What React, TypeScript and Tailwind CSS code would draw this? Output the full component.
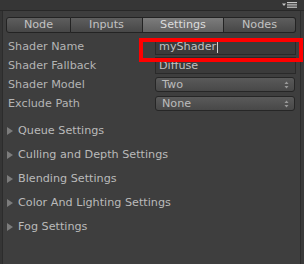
const tabs = [
  { label: "Node", w: "w-[65px]", active: false, first: true },
  { label: "Inputs", w: "w-[72px]", active: false },
  { label: "Settings", w: "w-[81px]", active: true },
  { label: "Nodes", w: "w-[72px]", active: false, last: true },
];

const foldouts = [
  "Queue Settings",
  "Culling and Depth Settings",
  "Blending Settings",
  "Color And Lighting Settings",
  "Fog Settings",
];

function UpDown() {
  return (
    <svg width="5" height="8" viewBox="0 0 5 8" className="shrink-0">
      <path d="M2.5 0.5 L4.5 3 L0.5 3 Z" fill="#9a9a9a" />
      <path d="M2.5 7.5 L4.5 5 L0.5 5 Z" fill="#9a9a9a" />
    </svg>
  );
}

function Dropdown({ value }: { value: string }) {
  return (
    <div className="flex h-[15px] w-[140px] items-center justify-between rounded-[3px] border border-[#262626] bg-gradient-to-b from-[#5a5a5a] to-[#484848] pl-[6px] pr-[5px] text-[#bcbcbc]">
      <span className="leading-none">{value}</span>
      <UpDown />
    </div>
  );
}

function TextField({ value, cursor }: { value: string; cursor?: boolean }) {
  return (
    <div className="flex h-[17px] w-[141px] items-center border border-[#2a2a2a] bg-[#3b3b3b] pl-[3px] text-[#c0c0c0]">
      <span className="leading-none">{value}</span>
      {cursor && <span className="ml-px h-[12px] w-px bg-[#d0d0d0]" />}
    </div>
  );
}

export default function App() {
  const rows = [
    { label: "Shader Name", field: <TextField value="myShader" cursor /> },
    { label: "Shader Fallback", field: <TextField value="Diffuse" /> },
    { label: "Shader Model", field: <Dropdown value="Two" /> },
    { label: "Exclude Path", field: <Dropdown value="None" /> },
  ];

  return (
    <div
      className="relative flex h-[264px] w-[304px] flex-col overflow-hidden bg-[#3e3e3e] text-[11.2px] text-[#b4b4b4]"
      style={{ fontFamily: '"DejaVu Sans", Verdana, sans-serif' }}
    >
      {/* top strip */}
      <div className="flex h-[11px] shrink-0 items-center justify-end border-b border-[#282828] bg-[#363636] pr-[7px]">
        <svg width="15" height="6" viewBox="0 0 15 6">
          <path d="M0 1.5 H4 L2 4 Z" fill="#c8c8c8" />
          <rect x="5" y="0" width="10" height="1.2" fill="#c8c8c8" />
          <rect x="5" y="2.3" width="10" height="1.2" fill="#c8c8c8" />
          <rect x="5" y="4.6" width="10" height="1.2" fill="#c8c8c8" />
        </svg>
      </div>

      <div className="flex flex-1">
        <div className="w-[3px] shrink-0 border-r border-[#2c2c2c] bg-[#353535]" />

        <div className="flex flex-1 flex-col">
          {/* tabs */}
          <div className="ml-[3px] mt-[6px] flex h-[16px]">
            {tabs.map((t) => (
              <div
                key={t.label}
                className={`flex ${t.w} items-center justify-center border-y border-r border-[#232323] leading-none ${
                  t.first ? "rounded-l-[3px] border-l" : ""
                } ${t.last ? "rounded-r-[3px]" : ""} ${
                  t.active
                    ? "bg-gradient-to-b from-[#7c7c7c] to-[#626262] text-[#dcdcdc]"
                    : "bg-gradient-to-b from-[#5e5e5e] to-[#474747] text-[#c2c2c2]"
                }`}
              >
                {t.label}
              </div>
            ))}
          </div>

          {/* property rows */}
          <div className="mt-[4px] flex flex-col">
            {rows.map((r) => (
              <div key={r.label} className="flex h-[19px] items-center">
                <span className="w-[152px] pl-[5px] leading-none">{r.label}</span>
                {r.field}
              </div>
            ))}
          </div>

          {/* foldouts */}
          <div className="mt-[6px] flex flex-col">
            {foldouts.map((f) => (
              <div key={f} className="flex h-[24px] items-center gap-[5px] pl-[4px] text-[#bababa]">
                <svg width="6" height="8" viewBox="0 0 6 8">
                  <path d="M0 0 L6 4 L0 8 Z" fill="#7c7c7c" />
                </svg>
                <span className="leading-none">{f}</span>
              </div>
            ))}
          </div>
        </div>

        <div className="w-[4px] shrink-0 border-l border-[#2c2c2c] bg-[#3a3a3a]" />
      </div>

      {/* highlight annotation */}
      <div className="absolute left-[139px] top-[38px] h-[24px] w-[164px] border-4 border-[#ff0000]" />
    </div>
  );
}
